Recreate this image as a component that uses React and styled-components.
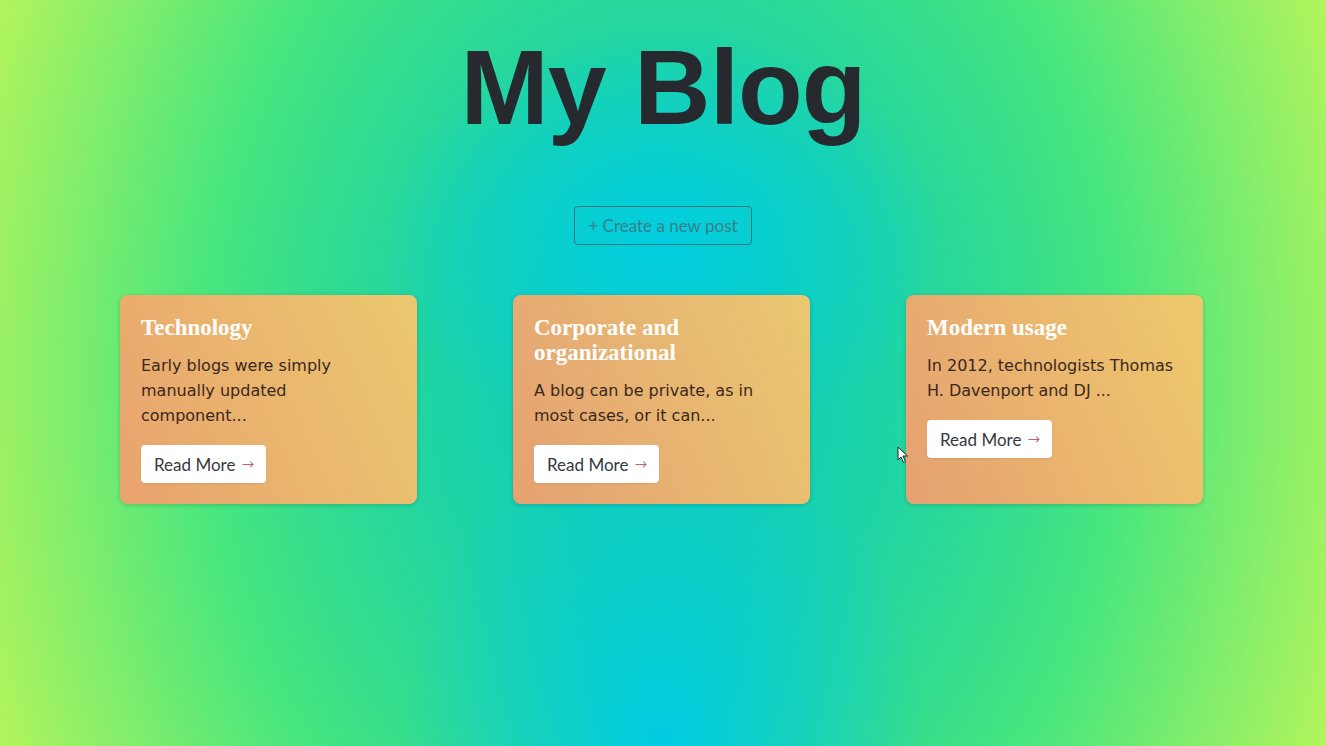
import styled, { createGlobalStyle } from 'styled-components';

const GlobalStyle = createGlobalStyle`
  html, body {
    margin: 0;
    padding: 0;
  }
  * {
    box-sizing: border-box;
  }
`;

const posts = [
  {
    id: 1,
    title: 'Technology',
    excerpt: 'Early blogs were simply manually updated component...',
  },
  {
    id: 2,
    title: 'Corporate and organizational',
    excerpt: 'A blog can be private, as in most cases, or it can...',
  },
  {
    id: 3,
    title: 'Modern usage',
    excerpt: 'In 2012, technologists Thomas H. Davenport and DJ ...',
  },
];

const Page = styled.main`
  position: relative;
  min-height: 100vh;
  padding-top: 24px;
  display: flex;
  flex-direction: column;
  align-items: center;
  overflow: hidden;
  background:
    radial-gradient(ellipse 280px 210px at 50% 32%, rgba(0, 206, 226, 0.95), rgba(0, 206, 226, 0)),
    radial-gradient(ellipse 260px 340px at 50% 100%, rgba(0, 204, 228, 1), rgba(0, 204, 228, 0)),
    radial-gradient(ellipse 720px 950px at 50% 50%, #0ccac4 0%, #1cd3a8 30%, #34dc8e 50%, #48e67e 64%, #b3f45c 100%);
`;

const Title = styled.h1`
  margin: 0;
  font-family: 'Liberation Sans', Arial, sans-serif;
  font-weight: 700;
  font-size: 106px;
  line-height: 1.2;
  letter-spacing: -1px;
  color: #262a2e;
`;

const CreateButton = styled.button`
  margin-top: 55px;
  height: 39px;
  padding: 0 13px;
  font-family: Lato, 'Liberation Sans', sans-serif;
  font-size: 17px;
  color: #3a7f8a;
  background: transparent;
  border: 1px solid #2a7780;
  border-radius: 4px;
  cursor: pointer;
`;

const Grid = styled.section`
  margin-top: 50px;
  margin-right: 3px;
  display: grid;
  grid-template-columns: repeat(3, 297px);
  gap: 96px;
`;

const Card = styled.article`
  min-height: 209px;
  padding: 20px 21px 21px;
  display: flex;
  flex-direction: column;
  align-items: flex-start;
  border-radius: 8px;
  background: linear-gradient(65deg, rgba(240, 158, 110, 0.95), rgba(246, 200, 108, 0.95));
  box-shadow: 0 1px 4px rgba(0, 0, 0, 0.18);
`;

const CardTitle = styled.h2`
  margin: 0 0 13px;
  font-family: 'Liberation Serif', 'Times New Roman', serif;
  font-weight: 700;
  font-size: 23px;
  line-height: 25px;
  color: #ffffff;
`;

const Excerpt = styled.p`
  margin: 0 0 17px;
  font-family: 'DejaVu Sans', Verdana, sans-serif;
  font-size: 16px;
  line-height: 25px;
  color: #3a2820;
`;

const ReadMore = styled.a`
  display: inline-flex;
  align-items: center;
  gap: 6px;
  height: 38px;
  padding: 0 12px 0 13px;
  font-family: Lato, 'Open Sans', sans-serif;
  font-size: 17px;
  color: #343a40;
  background: #ffffff;
  border-radius: 4px;
  text-decoration: none;
  box-shadow: 0 1px 2px rgba(0, 0, 0, 0.08);

  span {
    font-family: 'DejaVu Sans', sans-serif;
    font-size: 15px;
    font-weight: 300;
    color: #b8404c;
  }
`;

const Pointer = styled.svg`
  position: absolute;
  left: 897px;
  top: 446px;
  width: 12px;
  height: 18px;
`;

const App = () => {
  return (
    <>
      <GlobalStyle />
      <Page>
        <Title>My Blog</Title>
        <CreateButton>+ Create a new post</CreateButton>
        <Grid>
          {posts.map((post) => {
            const { id, title, excerpt } = post;
            return (
              <Card key={id}>
                <CardTitle>{title}</CardTitle>
                <Excerpt>{excerpt}</Excerpt>
                <ReadMore href='#'>
                  Read More <span>→</span>
                </ReadMore>
              </Card>
            );
          })}
        </Grid>
        <Pointer viewBox='0 0 12 18'>
          <path
            d='M1 1 L1 14 L4 11 L6.5 16.5 L8.5 15.5 L6 10 L10.5 10 Z'
            fill='#ffffff'
            stroke='#222'
            strokeWidth='1'
            strokeLinejoin='round'
          />
        </Pointer>
      </Page>
    </>
  );
};

export default App;
